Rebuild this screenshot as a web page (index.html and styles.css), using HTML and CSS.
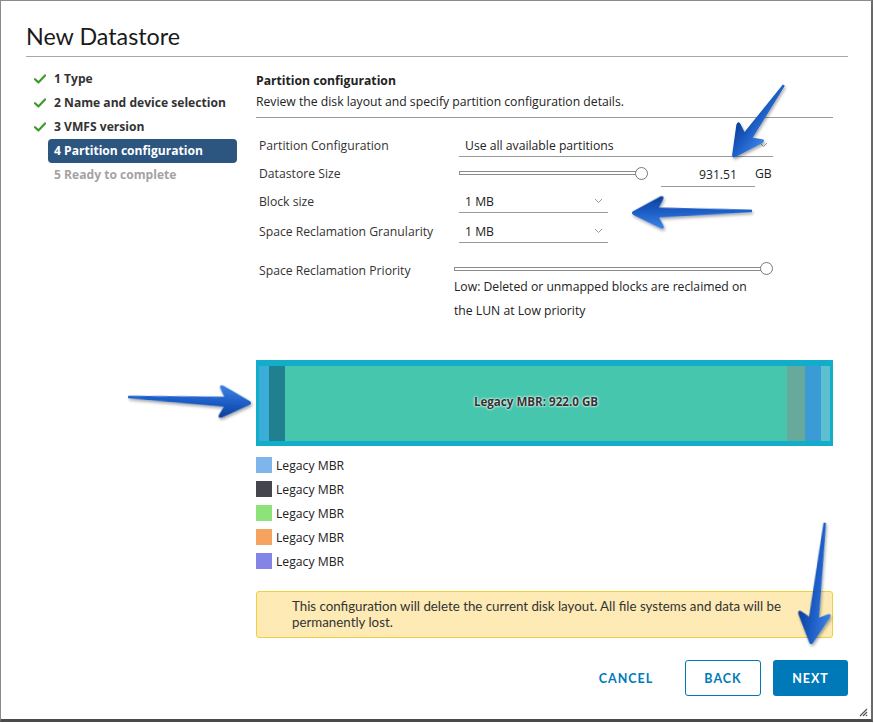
FILE: index.html
```html
<!DOCTYPE html>
<html>
<head>
<meta charset="utf-8">
<title>New Datastore</title>
<link rel="stylesheet" href="styles.css">
</head>
<body>
<div class="dialog">
  <header class="dlg-header"><h1>New Datastore</h1></header>
  <div class="dlg-body">
    <nav class="steps">
      <div class="step done"><span class="ic"><svg width="12" height="10" viewBox="0 0 12 10"><path d="M1 5.2 L4.4 8.4 L11 1.4" fill="none" stroke="#3f9a2d" stroke-width="2.2" stroke-linecap="round" stroke-linejoin="round"/></svg></span><span class="lbl">1 Type</span></div>
      <div class="step done"><span class="ic"><svg width="12" height="10" viewBox="0 0 12 10"><path d="M1 5.2 L4.4 8.4 L11 1.4" fill="none" stroke="#3f9a2d" stroke-width="2.2" stroke-linecap="round" stroke-linejoin="round"/></svg></span><span class="lbl">2 Name and device selection</span></div>
      <div class="step done"><span class="ic"><svg width="12" height="10" viewBox="0 0 12 10"><path d="M1 5.2 L4.4 8.4 L11 1.4" fill="none" stroke="#3f9a2d" stroke-width="2.2" stroke-linecap="round" stroke-linejoin="round"/></svg></span><span class="lbl">3 VMFS version</span></div>
      <div class="step active"><span class="ic"></span><span class="lbl">4 Partition configuration</span></div>
      <div class="step todo"><span class="ic"></span><span class="lbl">5 Ready to complete</span></div>
    </nav>
    <main class="content">
      <h2>Partition configuration</h2>
      <p class="desc">Review the disk layout and specify partition configuration details.</p>
      <div class="rule"></div>
      <div class="form">
        <div class="row">
          <label>Partition Configuration</label>
          <div class="select wide"><span>Use all available partitions</span><svg class="chev" width="9" height="6" viewBox="0 0 9 6"><path d="M1 1 L4.5 4.5 L8 1" fill="none" stroke="#9a9a9a" stroke-width="1"/></svg></div>
        </div>
        <div class="row">
          <label>Datastore Size</label>
          <div class="range size"><div class="track"></div><div class="thumb"></div></div>
          <div class="num">931.51</div>
          <span class="unit">GB</span>
        </div>
        <div class="row">
          <label>Block size</label>
          <div class="select short"><span>1 MB</span><svg class="chev" width="9" height="6" viewBox="0 0 9 6"><path d="M1 1 L4.5 4.5 L8 1" fill="none" stroke="#9a9a9a" stroke-width="1"/></svg></div>
        </div>
        <div class="row r4">
          <label>Space Reclamation Granularity</label>
          <div class="select short"><span>1 MB</span><svg class="chev" width="9" height="6" viewBox="0 0 9 6"><path d="M1 1 L4.5 4.5 L8 1" fill="none" stroke="#9a9a9a" stroke-width="1"/></svg></div>
        </div>
        <div class="row r5">
          <label>Space Reclamation Priority</label>
          <div class="prio">
            <div class="range long"><div class="track"></div><div class="thumb"></div></div>
            <p class="prio-text">Low: Deleted or unmapped blocks are reclaimed on<br>the LUN at Low priority</p>
          </div>
        </div>
      </div>
      <div class="disk">
        <div class="seg s1"></div>
        <div class="seg s2"></div>
        <div class="seg s3"><span>Legacy MBR: 922.0 GB</span></div>
        <div class="seg s4"></div>
        <div class="seg s5"></div>
        <div class="seg s6"></div>
      </div>
      <ul class="legend">
        <li><span class="sw c1"></span>Legacy MBR</li>
        <li><span class="sw c2"></span>Legacy MBR</li>
        <li><span class="sw c3"></span>Legacy MBR</li>
        <li><span class="sw c4"></span>Legacy MBR</li>
        <li><span class="sw c5"></span>Legacy MBR</li>
      </ul>
      <div class="alert"><span class="al-line">This configuration will delete the current disk layout. All file systems and data will be</span><span class="al-line">permanently lost.</span></div>
    </main>
  </div>
  <footer class="dlg-footer">
    <button class="btn cancel">CANCEL</button>
    <button class="btn back">BACK</button>
    <button class="btn next">NEXT</button>
  </footer>
  <svg class="grip" width="9" height="9" viewBox="0 0 9 9"><path d="M1 8 L8 1 M4 8 L8 4 M7 8 L8 7" stroke="#555" stroke-width="1.2"/></svg>
  <svg class="annot" width="873" height="723" viewBox="0 0 873 723">
    <defs>
      <linearGradient id="ag" x1="0" y1="0" x2="0" y2="1">
        <stop offset="0" stop-color="#3d82e3"/>
        <stop offset="0.55" stop-color="#1b5cc4"/>
        <stop offset="1" stop-color="#0b3f99"/>
      </linearGradient>
      <filter id="sh" x="-20%" y="-50%" width="140%" height="200%">
        <feDropShadow dx="1" dy="2" stdDeviation="1.4" flood-color="#000" flood-opacity="0.35"/>
      </filter>
    </defs>
    <g filter="url(#sh)" fill="url(#ag)">
      <g transform="translate(733 157) rotate(125.3)"><path d="M-88 -1.2 L-27 -5 L-31 -12.5 Q-33.5 -17 -28.5 -16 L-1 -1.8 Q1.2 0 -1 1.8 L-28.5 16 Q-33.5 17 -31 12.5 L-27 5 L-88 1.2 Z"/></g>
      <g transform="translate(632 213) rotate(179)"><path d="M-120 -1.2 L-27 -5 L-31 -12.5 Q-33.5 -17 -28.5 -16 L-1 -1.8 Q1.2 0 -1 1.8 L-28.5 16 Q-33.5 17 -31 12.5 L-27 5 L-120 1.2 Z"/></g>
      <g transform="translate(251 403) rotate(2.8)"><path d="M-123 -1.2 L-27 -5 L-31 -12.5 Q-33.5 -17 -28.5 -16 L-1 -1.8 Q1.2 0 -1 1.8 L-28.5 16 Q-33.5 17 -31 12.5 L-27 5 L-123 1.2 Z"/></g>
      <g transform="translate(811 644) rotate(96.5)"><path d="M-122 -1.2 L-27 -5 L-31 -12.5 Q-33.5 -17 -28.5 -16 L-1 -1.8 Q1.2 0 -1 1.8 L-28.5 16 Q-33.5 17 -31 12.5 L-27 5 L-122 1.2 Z"/></g>
    </g>
  </svg>
</div>
</body>
</html>
```
FILE: styles.css
```css
html, body { margin: 0; padding: 0; }
body {
  background: #fff;
  font-family: "Open Sans", "Noto Sans", sans-serif;
  color: #333;
}
.dialog {
  position: relative;
  width: 873px;
  height: 722px;
  box-sizing: border-box;
  border: 1px solid #8a8a8a;
  border-right: 2px solid #6a6a6a;
  border-bottom: 3px solid #4a4a4a;
  padding: 0 23px 23px 25px;
  display: flex;
  flex-direction: column;
  background: #fff;
}
.dlg-header {
  height: 55px;
  border-bottom: 1px solid #a8a8a8;
}
.dlg-header h1 {
  margin: 0;
  padding-top: 20px;
  font-family: Lato, "Open Sans", sans-serif;
  font-size: 23.3px;
  line-height: 30px;
  font-weight: 400;
  color: #1a1a1a;
}
.dlg-body {
  flex: 1;
  display: flex;
  padding-top: 10px;
}
.steps { width: 230px; }
.step {
  display: flex;
  align-items: center;
  height: 24px;
  font-size: 12.1px;
  font-weight: 700;
  color: #333;
}
.step .ic {
  width: 22px;
  padding-left: 8px;
  box-sizing: border-box;
  display: flex;
  align-items: center;
}
.step .lbl {
  width: 189px;
  height: 24px;
  line-height: 24px;
  padding: 0 6px;
  box-sizing: border-box;
  border-radius: 4px;
  white-space: nowrap;
}
.step.active .lbl { background: #2c5580; color: #fff; }
.step.todo .lbl { color: #a3a3a3; }

.content { width: 577px; padding-top: 4px; }
.content h2 {
  margin: 0;
  font-size: 12.2px;
  line-height: 20px;
  font-weight: 700;
  color: #222;
}
.desc {
  margin: 1px 0 0;
  font-size: 12.2px;
  line-height: 20px;
  color: #222;
}
.rule { border-top: 1px solid #9a9a9a; margin-top: 5px; }
.form { padding-top: 13px; }
.row {
  display: flex;
  align-items: center;
  height: 28px;
  padding-left: 3px;
  font-size: 12.2px;
}
.row label { width: 200px; flex: none; white-space: nowrap; }
.row.r4 { margin-top: 2px; }
.row.r5 { margin-top: 17px; height: auto; align-items: flex-start; }
.row.r5 label { line-height: 18px; }

.select {
  height: 24px;
  box-sizing: border-box;
  border-bottom: 1px solid #999;
  display: flex;
  align-items: center;
  justify-content: space-between;
  padding: 1px 5px 0 6px;
  color: #222;
}
.select.wide { width: 314px; }
.select.short { width: 149px; }
.chev { flex: none; }

.range { display: flex; align-items: center; height: 13px; }
.range.size { width: 189px; }
.range.long { width: 319px; }
.track {
  flex: 1;
  height: 4px;
  box-sizing: border-box;
  border: 1px solid #8c8c8c;
  background: #fff;
}
.thumb {
  width: 13px;
  height: 13px;
  box-sizing: border-box;
  border: 1px solid #777;
  border-radius: 50%;
  background: #fff;
  margin-left: -3px;
  flex: none;
}
.num {
  margin-left: 13px;
  width: 94px;
  height: 26px;
  margin-top: 1px;
  box-sizing: border-box;
  border-bottom: 1px solid #999;
  text-align: right;
  padding-right: 18px;
  line-height: 27px;
  color: #222;
}
.unit { margin-left: 0; color: #222; }

.prio { margin-left: -5px; }
.prio-text {
  margin: 0;
  line-height: 24px;
  color: #222;
}

.disk {
  margin-top: 37px;
  height: 86px;
  box-sizing: border-box;
  padding: 6px 3px 5px 3px;
  background: #12adc9;
  display: flex;
}
.seg { height: 100%; }
.s1 { width: 10px; background: #3aaed8; }
.s2 { width: 16px; background: #21808f; }
.s3 {
  width: 502px;
  background: #46c6ad;
  display: flex;
  align-items: center;
  justify-content: center;
  padding-bottom: 4px;
  box-sizing: border-box;
  font-size: 11.6px;
  font-weight: 700;
  color: #333;
  text-shadow: 0 0 3px #fff, 0 0 2px #fff;
}
.s4 { width: 18px; background: #67a99a; }
.s5 { width: 16px; background: #3a9bd5; }
.s6 { width: 9px; background: #5dbfd0; }

.legend {
  list-style: none;
  margin: 7px 0 0;
  padding: 0;
}
.legend li {
  display: flex;
  align-items: center;
  height: 24px;
  font-size: 12.2px;
  color: #222;
}
.sw { width: 16px; height: 16px; margin-right: 4px; }
.c1 { background: #7fb5ea; }
.c2 { background: #45454d; }
.c3 { background: #8ee27a; }
.c4 { background: #f5a35e; }
.c5 { background: #8484e6; }

.alert {
  margin-top: 18px;
  height: 47px;
  box-sizing: border-box;
  background: #fdeab5;
  border: 1px solid #efcf3e;
  border-radius: 3px;
  padding: 6px 10px 0 35px;
  font-family: Lato, "Open Sans", sans-serif;
  font-size: 13.3px;
  color: #333;
}
.al-line { display: block; height: 16px; line-height: 16px; white-space: nowrap; }

.dlg-footer {
  display: flex;
  justify-content: flex-end;
  gap: 12px;
  height: 36px;
}
.btn {
  height: 36px;
  box-sizing: border-box;
  font-family: Lato, "Open Sans", sans-serif;
  font-size: 12.5px;
  font-weight: 700;
  letter-spacing: 1px;
  border-radius: 3px;
  padding: 0;
  cursor: pointer;
}
.cancel { width: 76px; margin-right: 9px; border: none; background: transparent; color: #0079b8; }
.back { width: 76px; border: 1px solid #0079b8; background: #fff; color: #0079b8; }
.next { width: 75px; border: none; background: #0079b8; color: #fff; }

.grip { position: absolute; right: 3px; bottom: 2px; }
.annot { position: absolute; left: -1px; top: -1px; pointer-events: none; }
```
